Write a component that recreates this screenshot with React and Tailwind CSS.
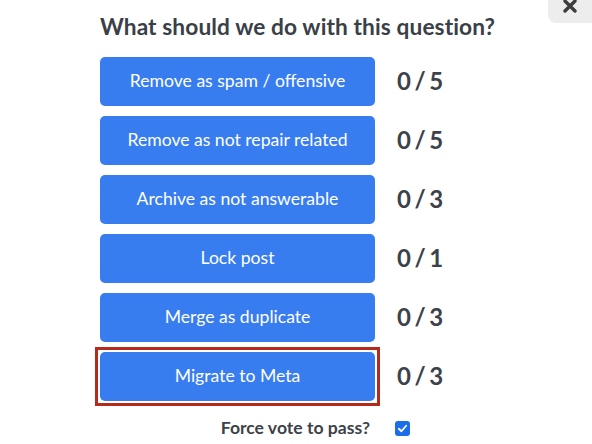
import React from 'react';

const actions = [
  { label: 'Remove as spam / offensive', count: '0 / 5' },
  { label: 'Remove as not repair related', count: '0 / 5' },
  { label: 'Archive as not answerable', count: '0 / 3' },
  { label: 'Lock post', count: '0 / 1' },
  { label: 'Merge as duplicate', count: '0 / 3' },
  { label: 'Migrate to Meta', count: '0 / 3', highlight: true },
];

export default function App() {
  return (
    <div className="relative w-[592px] h-[444px] overflow-hidden bg-white" style={{ fontFamily: 'Lato, "Open Sans", sans-serif' }}>
      <button className="absolute top-0 right-0 w-[44px] h-[23px] rounded-bl-lg bg-[#ededed] flex items-start justify-center pr-[1px]">
        <svg width="14" height="14" viewBox="0 0 14 14" className="-mt-[1px]">
          <path d="M2 2 L12 12 M12 2 L2 12" stroke="#3d3d3d" strokeWidth="3.4" strokeLinecap="round" />
        </svg>
      </button>

      <div className="pl-[100px] pt-[12px]">
        <h2 className="text-[22.7px] font-bold text-[#3a4047] leading-[30px] tracking-[0.1px]">
          What should we do with this question?
        </h2>

        <div className="mt-[15px] flex flex-col gap-[10px]">
          {actions.map((a) => (
            <div key={a.label} className="flex items-center">
              <div className={a.highlight ? 'outline-[3px] outline-solid outline-[#b52a1a] outline-offset-[2px]' : ''}>
                <button className="block w-[275px] h-[49px] rounded-[5px] bg-[#377df0] text-white text-[17.6px]">
                  {a.label}
                </button>
              </div>
              <span className="ml-[22px] -mt-[2px] text-[24px] font-bold text-[#3c4249] tracking-[-0.6px] [word-spacing:-1px]">{a.count}</span>
            </div>
          ))}
        </div>

        <div className="mt-[14px] flex items-center">
          <span className="w-[270px] text-right text-[17.6px] font-bold text-[#3c4249]">Force vote to pass?</span>
          <span className="ml-[25px] w-[15px] h-[15px] rounded-[3px] bg-[#1a6fe8] flex items-center justify-center">
            <svg width="11" height="11" viewBox="0 0 12 12">
              <path d="M2 6.3 L4.8 9 L10 3" fill="none" stroke="white" strokeWidth="2" strokeLinecap="round" strokeLinejoin="round" />
            </svg>
          </span>
        </div>
      </div>
    </div>
  );
}
